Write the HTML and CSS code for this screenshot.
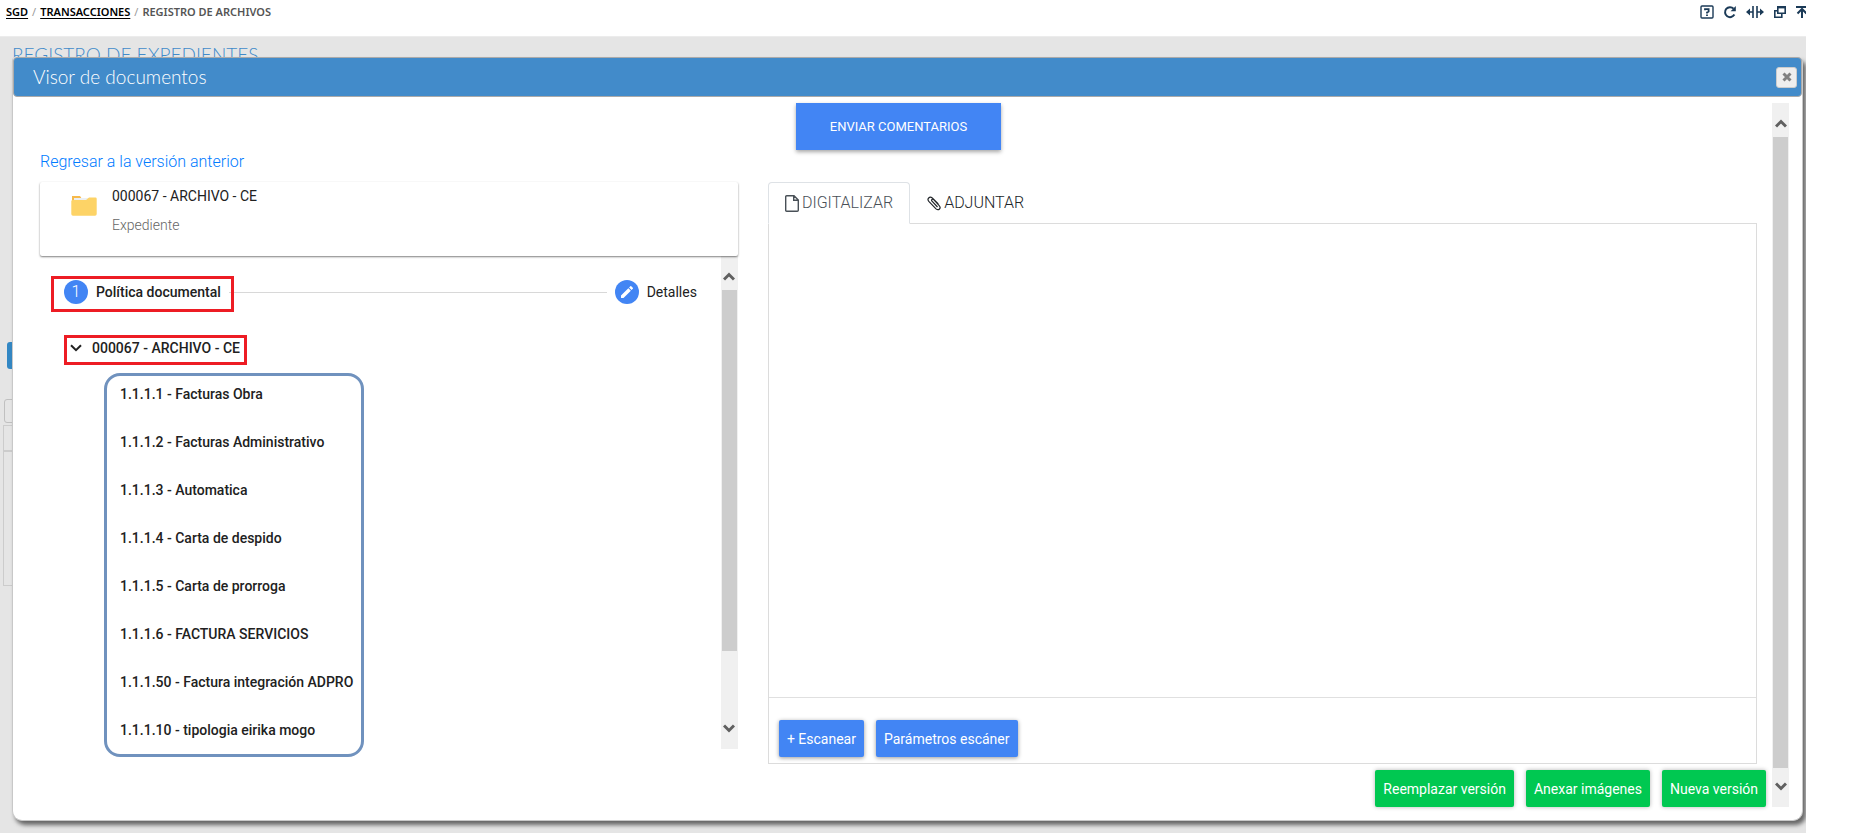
FILE: index.html
```html
<!DOCTYPE html>
<html lang="es">
<head>
<meta charset="utf-8">
<title>Registro de archivos</title>
<link rel="stylesheet" href="styles.css">
</head>
<body>
<div class="app">
  <header class="topbar">
    <nav class="crumbs" aria-label="Ruta">
      <a href="#">SGD</a><span class="sep">/</span><a href="#">TRANSACCIONES</a><span class="sep">/</span><span class="current">REGISTRO DE ARCHIVOS</span>
    </nav>
    <div class="tools">
      <button type="button" aria-label="Ayuda"><svg width="14" height="14" viewBox="0 0 14 14"><rect x="1" y="1" width="12" height="12" rx="1" fill="none" stroke="currentColor" stroke-width="1.4"/><path d="M5 5.3V4.2h3.6v2.4L7 7.6v1M7 9.6v1.5" fill="none" stroke="currentColor" stroke-width="1.8"/></svg></button>
      <button type="button" aria-label="Recargar"><svg width="14" height="14" viewBox="0 0 14 14"><path d="M11.4 9.6A5 5 0 1 1 10.6 3.6" fill="none" stroke="currentColor" stroke-width="2"/><path d="M12.8 1v5.2H7.6z" fill="currentColor"/></svg></button>
      <button type="button" aria-label="Ajustar ancho"><svg width="18" height="14" viewBox="0 0 18 14"><path d="M7 1v12M11 1v12M3 7h4M11 7h4" fill="none" stroke="currentColor" stroke-width="1.6"/><path d="M0 7l4-3.500v7zM18 7l-4-3.500v7z" fill="currentColor"/></svg></button>
      <button type="button" aria-label="Restaurar"><svg width="14" height="14" viewBox="0 0 14 14"><path d="M4.800 1.800h7.400v6.400H4.800zM4 5.800H1.800v6.400h7V9" fill="none" stroke="currentColor" stroke-width="1.6"/><path d="M4 1h9v2.400H4z" fill="currentColor"/></svg></button>
      <button type="button" aria-label="Subir"><svg width="10" height="14" viewBox="0 0 10 14"><path d="M0 2h10M6 4v9" fill="none" stroke="currentColor" stroke-width="2"/><path d="M1.500 8.500L6 4l4.500 4.500" fill="none" stroke="currentColor" stroke-width="2"/></svg></button>
    </div>
  </header>

  <main class="workspace">
    <h1 class="page-title">REGISTRO DE EXPEDIENTES</h1>
    <div class="behind" aria-hidden="true">
      <div class="behind-btn"></div>
      <div class="behind-field"></div>
      <div class="behind-head"></div>
      <div class="behind-grid"></div>
    </div>

    <section class="dialog" role="dialog" aria-labelledby="dlg-title">
      <div class="titlebar">
        <h2 id="dlg-title">Visor de documentos</h2>
        <button type="button" class="close" aria-label="Cerrar"><svg width="10" height="10" viewBox="0 0 10 10"><path d="M1.500 1.500l7 7M8.500 1.500l-7 7" stroke="currentColor" stroke-width="3"/></svg></button>
      </div>
      <div class="frame">
        <div class="content">
          <div class="send"><button type="button" class="btn-send">ENVIAR COMENTARIOS</button></div>
          <a class="back" href="#">Regresar a la versión anterior</a>
          <div class="columns">
            <div class="col-left">
              <div class="card">
                <svg class="folder" width="26" height="20" viewBox="0 0 26 20"><path d="M1 0h8l2 3v5H1z" fill="#f6b94b"/><path d="M3 2h15v5H3z" fill="#eceff1"/><path d="M1 4h14l3-2.500h6.500q1.200 0 1.200 1.200V18q0 1.700-1.700 1.700H2Q.3 19.700.3 18V5z" fill="#fdd366"/></svg>
                <div>
                  <div class="card-title">000067 - ARCHIVO - CE</div>
                  <div class="card-sub">Expediente</div>
                </div>
              </div>
              <div class="scroller">
                <div class="scroller-body">
                  <div class="stepper">
                    <div class="step active"><span class="dot">1</span><span>Política documental</span></div>
                    <div class="line"></div>
                    <div class="step"><span class="dot"><svg width="16" height="16" viewBox="0 0 24 24"><path d="M3 17.250V21h3.750L17.810 9.940l-3.750-3.750zM20.710 7.040a1 1 0 0 0 0-1.410l-2.340-2.340a1 1 0 0 0-1.410 0l-1.830 1.830 3.750 3.750z" fill="#fff"/></svg></span><span>Detalles</span></div>
                  </div>
                  <button type="button" class="node"><svg width="12" height="8" viewBox="0 0 12 8"><path d="M1 1.200l5 5 5-5" fill="none" stroke="currentColor" stroke-width="2"/></svg><span>000067 - ARCHIVO - CE</span></button>
                  <ul class="leaves">
                    <li>1.1.1.1 - Facturas Obra</li>
                    <li>1.1.1.2 - Facturas Administrativo</li>
                    <li>1.1.1.3 - Automatica</li>
                    <li>1.1.1.4 - Carta de despido</li>
                    <li>1.1.1.5 - Carta de prorroga</li>
                    <li>1.1.1.6 - FACTURA SERVICIOS</li>
                    <li>1.1.1.50 - Factura integración ADPRO</li>
                    <li>1.1.1.10 - tipologia eirika mogo</li>
                  </ul>
                </div>
                <div class="scrollbar inner">
                  <svg width="12" height="9" viewBox="0 0 12 9"><path d="M1 7.500L6 2.500l5 5" fill="none" stroke="#606060" stroke-width="3"/></svg>
                  <div class="track"><div class="thumb"></div></div>
                  <svg width="12" height="9" viewBox="0 0 12 9"><path d="M1 1.500L6 6.500l5-5" fill="none" stroke="#606060" stroke-width="3"/></svg>
                </div>
              </div>
            </div>
            <div class="col-right">
              <div class="tabs" role="tablist">
                <button type="button" role="tab" aria-selected="true" class="tab on"><svg width="14" height="17" viewBox="0 0 14 17"><path d="M.7 1.700q0-1 1-1H9L13.300 5v10.300q0 1-1 1H1.700q-1 0-1-1zM8.700.7V5.300h4.600" fill="none" stroke="currentColor" stroke-width="1.400"/></svg><span>DIGITALIZAR</span></button>
                <button type="button" role="tab" aria-selected="false" class="tab"><svg width="14" height="15" viewBox="0 0 14 15"><path d="M10.500 11L5 5.200Q4.200 4.200 5 3.500T6.700 3.600L12 9.300Q14 11.500 12.500 13T9 12.900L1.800 5.400Q.2 3.600 1.700 2T5.300 1.900L11.300 8" fill="none" stroke="currentColor" stroke-width="1.200"/></svg><span>ADJUNTAR</span></button>
              </div>
              <div class="panel" role="tabpanel">
                <div class="preview"></div>
                <div class="panel-actions">
                  <button type="button" class="btn blue">+ Escanear</button>
                  <button type="button" class="btn blue">Parámetros escáner</button>
                </div>
              </div>
            </div>
          </div>
          <div class="footer">
            <button type="button" class="btn green">Reemplazar versión</button>
            <button type="button" class="btn green">Anexar imágenes</button>
            <button type="button" class="btn green">Nueva versión</button>
          </div>
        </div>
        <div class="scrollbar outer">
          <svg width="12" height="9" viewBox="0 0 12 9"><path d="M1 7.500L6 2.500l5 5" fill="none" stroke="#606060" stroke-width="3"/></svg>
          <div class="track"><div class="thumb"></div></div>
          <svg width="12" height="9" viewBox="0 0 12 9"><path d="M1 1.500L6 6.500l5-5" fill="none" stroke="#606060" stroke-width="3"/></svg>
        </div>
      </div>
    </section>
  </main>
</div>
</body>
</html>
```
FILE: styles.css
```css
* { box-sizing: border-box; }
body { margin: 0; background: #fff; color: #212121; font: 14px/20px Roboto, "Liberation Sans", sans-serif; }
button { font: inherit; color: inherit; border: 0; padding: 0; background: none; cursor: pointer; }
svg { display: block; flex: none; }

.app { display: flex; flex-direction: column; min-height: 100vh; margin-right: 69px; overflow: hidden; }

/* Top bar */
.topbar { display: flex; justify-content: space-between; height: 36px; padding: 0 0 12px 6px; align-items: center; }
.crumbs { display: flex; gap: 4px; font: 600 11px/16px "Noto Sans", "Open Sans", sans-serif; }
.crumbs a { color: #000; text-decoration: underline; text-underline-offset: 2px; }
.crumbs .sep { color: #999; font-weight: 400; }
.crumbs .current { color: #555; }
.tools { display: flex; align-items: center; gap: 9px; color: #1b3a57; }

/* Page under the dialog */
.workspace { position: relative; flex: 1; background: #e5e5e5; border-top: 1px solid #ececec; }
.page-title { margin: 0; padding: 8px 0 0 12px; color: #428bca; font: 300 19px/20px Lato, sans-serif; }
.behind { padding: 277px 0 0 3px; }
.behind-btn { width: 60px; height: 27px; margin-left: 4px; border-radius: 3px; background: #3287c4; }
.behind-field { width: 60px; height: 24px; margin: 30px 0 2px 1px; border: 1px solid #c0c0c0; border-radius: 3px; }
.behind-head { width: 60px; height: 27px; border: 1px solid #ccc; border-bottom-width: 2px; }
.behind-grid { width: 60px; height: 134px; border: 1px solid #ccc; border-top: 0; }

/* Dialog */
.dialog { position: absolute; inset: 20px 3px 12px 12px; display: flex; flex-direction: column; background: #fff; border: 1px solid #c8c8c8; border-top: 0; border-radius: 4px 6px 10px 10px; box-shadow: 3px 4px 4px #666; }
.titlebar { display: flex; align-items: center; justify-content: space-between; height: 40px; padding: 0 4px 0 19px; background: #428bca; border: 1px solid #aaa; border-radius: 4px; color: #fff; }
.titlebar h2 { margin: 0; font: 300 19px/24px Lato, sans-serif; }
.close { display: grid; place-items: center; width: 21px; height: 21px; border: 1px solid #ccc; border-radius: 3px; background: #eee; color: #808080; }
.frame { flex: 1; display: flex; padding: 6px 13px 13px 12px; min-height: 0; }
.content { flex: 1; display: flex; flex-direction: column; min-width: 0; }
.send { display: flex; justify-content: center; }
.btn-send { padding: 0 34px; height: 47px; background: #4285f4; color: #fff; font-size: 13px; box-shadow: 0 2px 4px rgba(0,0,0,.35); }
.back { align-self: flex-start; margin: 0 15px; color: #007bff; font-weight: 300; font-size: 16px; line-height: 24px; text-decoration: none; }
.columns { flex: 1; display: grid; grid-template: minmax(0, 1fr) / 5fr 7fr; min-height: 0; padding-top: 8px; }
.col-left { min-width: 0; padding: 0 15px 15px; display: flex; flex-direction: column; }
.col-right { min-width: 0; padding: 0 15px; display: flex; flex-direction: column; }

.card { display: flex; gap: 15px; height: 74px; padding: 4px 0 0 31px; border-radius: 2px; background: #fff; box-shadow: 0 1px 2px rgba(0,0,0,.5); z-index: 1; }
.folder { margin-top: 10px; }
.card-sub { margin-top: 9px; font-weight: 300; color: #666; }

.scroller { flex: 1; display: flex; min-height: 0; }
.scroller-body { flex: 1; padding: 24px 24px 0; }
.stepper { display: flex; align-items: center; }
.step { position: relative; display: flex; align-items: center; gap: 8px; }
.step.active { font-weight: 500; }
.step.active::after { content: ""; position: absolute; inset: -4px -13px -8px -13px; border: 3px solid #ed1c24; }
.dot { display: grid; place-items: center; width: 24px; height: 24px; border-radius: 50%; background: #4285f4; color: #fff; font-weight: 300; font-size: 16px; }
.line { flex: 1; height: 1px; margin: 0 8px; background: #d8d8d8; }
.node { position: relative; display: flex; align-items: center; gap: 10px; height: 24px; margin: 32px 0 0 6px; font-weight: 500; }
.node::after { content: ""; position: absolute; inset: -1px -7px -5px -6px; border: 3px solid #ed1c24; }
.leaves { position: relative; width: 260px; margin: 10px 0 0 40px; padding: 0 0 0 16px; list-style: none; font-weight: 500; white-space: nowrap; }
.leaves::after { content: ""; position: absolute; inset: 3px 0 -3px; border: 3px solid #7092be; border-radius: 16px; }
.leaves li { line-height: 48px; }

/* Scroll bars */
.scrollbar { display: flex; flex-direction: column; align-items: center; width: 17px; padding: 16px 0; background: #f0f0f0; }
.track { flex: 1; align-self: stretch; margin: 9px 1px 14px; display: flex; flex-direction: column; }
.thumb { height: 100%; background: #cdcdcd; }
.inner .thumb { height: 86%; }

/* Tabs */
.tabs { display: flex; margin-bottom: -1px; font-weight: 300; font-size: 16px; z-index: 1; }
.tab { display: flex; align-items: center; gap: 3px; height: 42px; padding: 0 16px; border: 1px solid transparent; border-radius: 4px 4px 0 0; color: #212529; }
.tab.on { background: #fff; border-color: #dee2e6; border-bottom-color: #fff; color: #495057; }
.panel { flex: 1; display: flex; flex-direction: column; border: 1px solid #dcdcdc; }
.preview { flex: 1; border-bottom: 1px solid #e0e0e0; }
.panel-actions { display: flex; gap: 12px; padding: 22px 10px 6px; }
.btn { height: 37px; padding: 0 8px; border-radius: 2px; color: #fff; box-shadow: 0 1px 4px rgba(0,0,0,.4); }
.blue { background: #4285f4; }
.green { background: #00c851; box-shadow: 0 0 4px rgba(0,0,0,.3); }
.footer { display: flex; justify-content: flex-end; gap: 12px; padding: 6px 6px 0; }
```
